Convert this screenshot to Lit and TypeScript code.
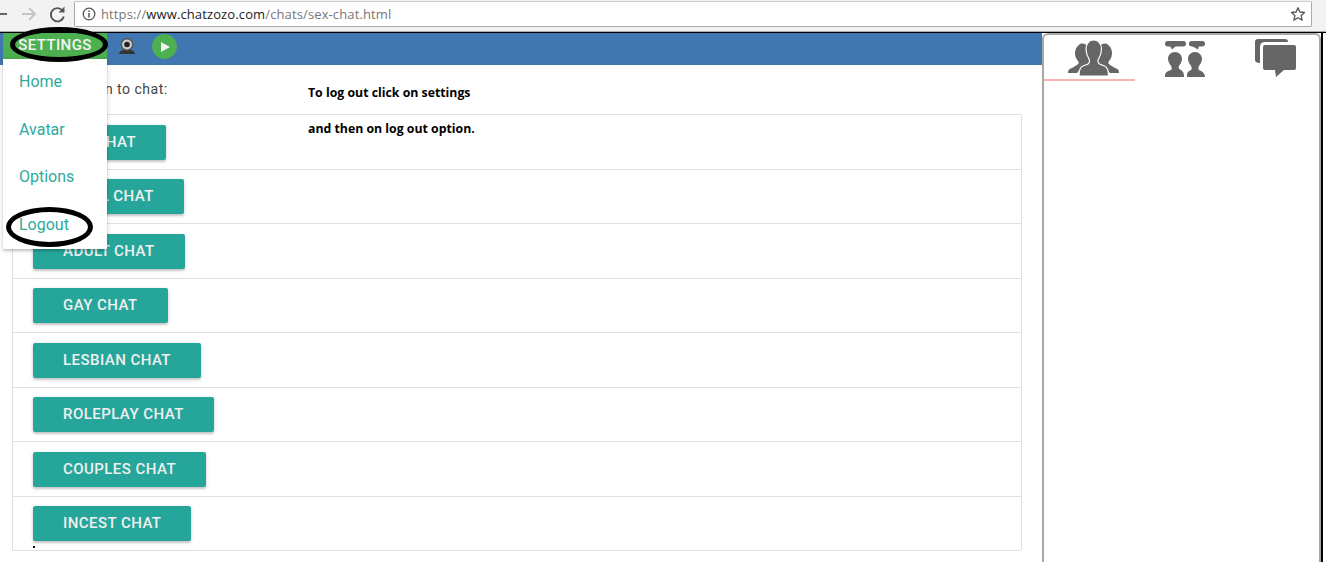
import { LitElement, html, css } from "lit";
import { customElement } from "lit/decorators.js";

const ROOMS = ["SEX CHAT", "TAMIL CHAT", "ADULT CHAT", "GAY CHAT", "LESBIAN CHAT", "ROLEPLAY CHAT", "COUPLES CHAT", "INCEST CHAT"];

@customElement("app-root")
export class AppRoot extends LitElement {
  static styles = css`
    :host { display: block; width: 1326px; height: 562px; position: relative; overflow: hidden; background: #fff; font-family: Roboto, sans-serif; }
    .chrome { height: 32px; box-sizing: border-box; background: #f2f2f2; display: flex; align-items: flex-start; padding-top: 1px; border-bottom: 1px solid #a9a9a9; }
    .nav { width: 74px; height: 26px; flex: none; display: block; }
    .url { width: 1238px; height: 26px; box-sizing: border-box; flex: none; background: #fff; border: 1px solid #a9a9a9; border-top-color: #ccc; border-radius: 2px; display: flex; align-items: center; padding: 0 5px 0 7px; font: 13px/1 "Open Sans", sans-serif; color: #777; }
    .url b { font-weight: 400; color: #222; }
    .url .info { margin-right: 5px; flex: none; }
    .url .grow { flex: 1; white-space: nowrap; letter-spacing: .12px; }
    .main { display: flex; height: 530px; border-top: 1px solid #000; box-sizing: border-box; }
    .left { width: 1042px; flex: none; }
    .bar { height: 32px; background: #4077b0; display: flex; align-items: flex-start; padding-left: 3px; }
    .settings { width: 104px; height: 26px; flex: none; background: #4caf50; color: #f4f4f4; font: 500 15px/24px Roboto, sans-serif; letter-spacing: .4px; text-align: center; }
    .cam { margin: 4px 0 0 10px; flex: none; }
    .play { margin: 1px 0 0 15px; width: 25px; height: 25px; border-radius: 50%; background: #4caf50; flex: none; display: flex; align-items: center; justify-content: center; }
    .play i { display: block; width: 0; height: 0; border-left: 9px solid #f4f4f4; border-top: 5px solid transparent; border-bottom: 5px solid transparent; margin-left: 2px; }
    .content { padding: 16px 0 0 12px; }
    .lead { padding-left: 21px; height: 33px; font: 14px/17px Roboto, sans-serif; letter-spacing: .5px; color: #444; }
    .list { width: 1010px; height: 437px; box-sizing: border-box; border: 1px solid #e0e0e0; border-radius: 2px; position: relative; }
    .row { height: 54.5px; box-sizing: border-box; padding: 9.9px 0 0 20px; border-bottom: 1px solid #e0e0e0; }
    .row:last-child { border-bottom: 0; }
    .btn { display: inline-block; height: 35px; padding: 0 30px; border-radius: 2px; background: #26a69a; color: #f0f0f0; font: 500 15px/35px Roboto, sans-serif; letter-spacing: .45px; box-shadow: 0 2px 2px rgba(0,0,0,.14), 0 1px 4px rgba(0,0,0,.14); }
    .dot { position: absolute; left: 20px; bottom: 2px; width: 2px; height: 2px; background: #000; }
    .side { width: 279px; height: 529px; flex: none; box-sizing: border-box; border: 2px solid #a8a8a8; border-bottom: 0; border-radius: 6px 6px 0 0; background: #fff; }
    .tabs { display: grid; grid-template-columns: 91px 92px 92px; height: 46px; }
    .tab { display: flex; justify-content: center; align-items: flex-start; box-sizing: border-box; height: 46px; }
    .tab.on { border-bottom: 2px solid #ffb0b4; padding: 5px 0 0 7px; }
    .t2 { padding: 6px 0 0 8px; }
    .t3 { padding: 4px 0 0 5px; }
    .edge { width: 2px; flex: none; background: #000; }
    .menu { position: absolute; left: 3px; top: 59px; width: 104px; height: 190px; background: #fff; box-shadow: 0 2px 2px rgba(0,0,0,.14), 0 1px 5px rgba(0,0,0,.16); display: grid; grid-auto-rows: 47.7px; }
    .menu span { padding-left: 16px; font: 16px/46px Roboto, sans-serif; color: #2eaa9e; }
    .ring { position: absolute; border: 5px solid #000; border-radius: 50%; box-sizing: border-box; }
    .r1 { left: 10px; top: 27px; width: 98px; height: 35px; }
    .r2 { left: 6px; top: 207px; width: 87px; height: 40px; }
    .note { position: absolute; left: 308px; font: 700 12.3px/17px "Open Sans", sans-serif; color: #000; white-space: nowrap; }
    .n1 { top: 84px; }
    .n2 { top: 120px; }
  `;

  render() {
    return html`
      <div class="chrome">
        <svg class="nav" viewBox="0 0 74 26" fill="none">
          <path d="M-2 13H7M-1 8l-5 5 5 5" stroke="#666" stroke-width="1.8"/>
          <path d="M22 13H35M29 7l6 6-6 6" stroke="#c4c4c4" stroke-width="1.8"/>
          <path d="M62.5 9.5a6.600 6.600 0 1 0 1.300 6" stroke="#555" stroke-width="1.900"/>
          <path d="M64.500 5.500v6h-6z" fill="#555"/>
        </svg>
        <div class="url">
          <svg class="info" width="14" height="14" viewBox="0 0 14 14" fill="none">
            <circle cx="7" cy="7" r="5.800" stroke="#555" stroke-width="1.300"/>
            <path d="M7 6v4.400M7 3.600v1.400" stroke="#555" stroke-width="1.500"/>
          </svg>
          <span class="grow">https://<b>www.chatzozo.com</b>/chats/sex-chat.html</span>
          <svg width="16" height="16" viewBox="0 0 16 16" fill="none">
            <path d="M8 1.800l1.900 4.200 4.600.5-3.400 3.100 1 4.500L8 11.800l-4.100 2.300 1-4.500-3.400-3.100 4.600-.5z" stroke="#555" stroke-width="1.300" stroke-linejoin="round"/>
          </svg>
        </div>
      </div>
      <div class="main">
        <div class="left">
          <div class="bar">
            <div class="settings">SETTINGS</div>
            <svg class="cam" width="20" height="18" viewBox="0 0 20 18">
              <path d="M2 17q1-4 5-4h6q4 0 5 4z" fill="#333"/>
              <circle cx="10" cy="7.500" r="6.500" fill="#555"/>
              <circle cx="10" cy="7.500" r="5" fill="#ccc"/>
              <circle cx="10" cy="7.500" r="2.800" fill="#222"/>
            </svg>
            <div class="play"><i></i></div>
          </div>
          <div class="content">
            <div class="lead">Click button to chat:</div>
            <div class="list">
              ${ROOMS.map((r) => html`<div class="row"><span class="btn">${r}</span></div>`)}
              <div class="dot"></div>
            </div>
          </div>
        </div>
        <div class="side">
          <div class="tabs">
            <div class="tab on">
              <svg width="51" height="36" viewBox="0 0 51 36" fill="#666">
                <path d="M12 4c3-1 6 0 7 2 0 5 0 10 2 13 1 3 0 5-3 6l-4 2-5 6H0c0-3 1-4 4-5l5-3c2-1 2-3 1-4-2-2-3-5-3-8 0-4 2-7 5-9z"/>
                <path d="M39 4c-3-1-6 0-7 2 0 5 0 10-2 13-1 3 0 5 3 6l4 2 5 6h9c0-3-1-4-4-5l-5-3c-2-1-2-3-1-4 2-2 3-5 3-8 0-4-2-7-5-9z"/>
                <path stroke="#fff" stroke-width="1.200" d="M25.500 0c5 0 8 4 8 9 0 4-1 7-3 10-1 2-1 3 1 5l5 2c3 1 4 4 4 10H11c0-6 1-9 4-10l5-2c2-2 2-3 1-5-2-3-3-6-3-10 0-5 3-9 7.500-9z"/>
              </svg>
            </div>
            <div class="tab t2">
              <svg width="40" height="36" viewBox="0 0 40 36" fill="#666">
                <rect x="0" y="0" width="21" height="5.500" rx="2.700"/><path d="M5 5h6l-4 3.500z"/>
                <rect x="24" y="0" width="16" height="5.500" rx="2.700"/><path d="M27 5h7l-1 3.500z"/>
                <path d="M10 11c4 0 7 3 7 7 0 3-2 5-3 7-1 2 0 3 2 4 1 1 3 2 3 6v1H0v-1c0-4 3-5 6-6 1-1 1-2 0-4-1-2-3-4-3-7 0-4 3-7 7-7z"/>
                <path d="M30 11c4 0 7 3 7 7 0 3-2 5-3 7-1 2-1 3 0 4 2 1 5 2 6 6v1H22v-2c0-3 2-4 4-5 1-1 1-2 0-4-1-2-3-4-3-7 0-4 3-7 7-7z"/>
              </svg>
            </div>
            <div class="tab t3">
              <svg width="41" height="38" viewBox="0 0 41 38" fill="#666">
                <path d="M3 0h27q3 0 3 3H10q-5 0-5 5v16q-5 0-5-3V3q0-3 3-3z"/>
                <path d="M10 6h29q2 0 2 2v21q0 2-2 2H29l-8 7-1-7H10q-2 0-2-2V8q0-2 2-2z"/>
              </svg>
            </div>
          </div>
        </div>
        <div class="edge"></div>
      </div>
      <div class="menu"><span>Home</span><span>Avatar</span><span>Options</span><span>Logout</span></div>
      <div class="ring r1"></div>
      <div class="ring r2"></div>
      <div class="note n1">To log out click on settings</div>
      <div class="note n2">and then on log out option.</div>
    `;
  }
}
